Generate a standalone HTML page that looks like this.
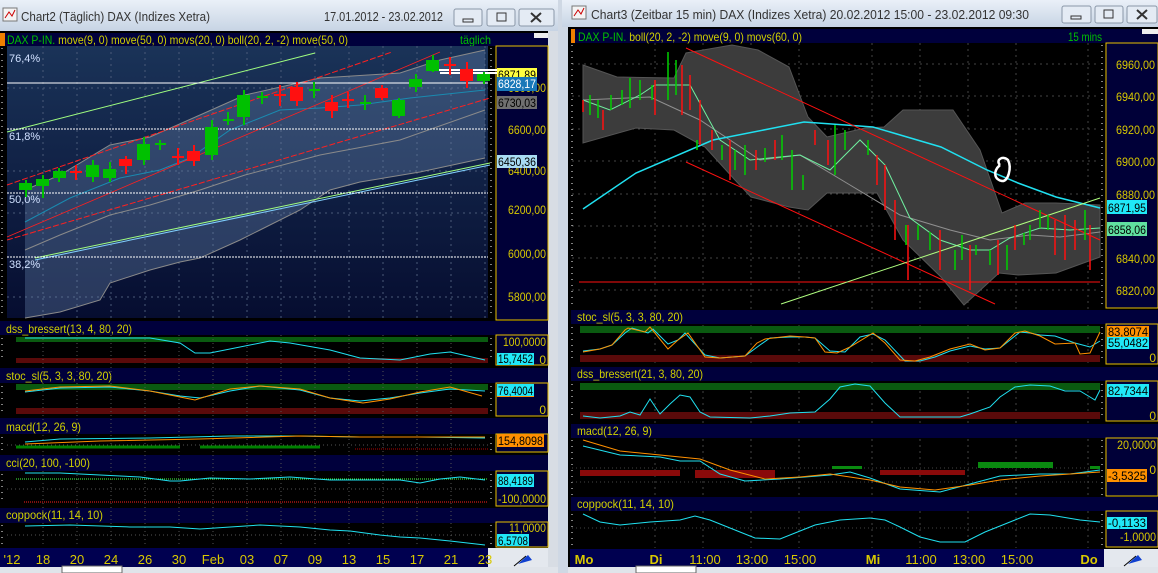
<!DOCTYPE html>
<html><head><meta charset="utf-8"><style>
html,body{margin:0;padding:0;background:#d4dbe5;width:1158px;height:573px;overflow:hidden}
svg{display:block}
text{font-family:"Liberation Sans",sans-serif}
</style></head><body>
<svg width="1158" height="573" viewBox="0 0 1158 573" xmlns="http://www.w3.org/2000/svg">
<defs>
<linearGradient id="tb" x1="0" y1="0" x2="0" y2="1"><stop offset="0" stop-color="#eaf0f8"/><stop offset="1" stop-color="#c7d4e4"/></linearGradient>
<linearGradient id="lm" x1="0" y1="0" x2="0" y2="1"><stop offset="0" stop-color="#1a3358"/><stop offset="1" stop-color="#060d30"/></linearGradient>
</defs>
<rect width="1158" height="573" fill="#cfd8e4"/>
<!-- LEFT WINDOW -->
<rect x="0" y="0" width="558" height="31" fill="url(#tb)"/>
<rect x="3" y="8" width="14" height="13" fill="#f4f4f4" stroke="#777"/><path d="M5 18 L9 12 L12 16 L15 10" stroke="#c00" fill="none"/>
<text x="21" y="21" font-size="13" fill="#333" textLength="189" lengthAdjust="spacingAndGlyphs">Chart2 (Täglich)  DAX (Indizes Xetra)</text>
<text x="324" y="21" font-size="13" fill="#333" textLength="119" lengthAdjust="spacingAndGlyphs">17.01.2012 - 23.02.2012</text>
<g fill="#e4ebf4" stroke="#8a97a8"><rect x="454" y="9" width="28" height="17" rx="2"/><rect x="487" y="9" width="28" height="17" rx="2"/><rect x="519" y="9" width="35" height="17" rx="2"/></g>
<rect x="463" y="19" width="10" height="3" fill="none" stroke="#333"/><rect x="497" y="13" width="9" height="8" fill="none" stroke="#333"/><path d="M531 13 L541 22 M541 13 L531 22" stroke="#333" stroke-width="2"/>
<rect x="0" y="31" width="558" height="542" fill="#000"/>
<rect x="0" y="33" width="548" height="13" fill="#00003c"/>
<rect x="0" y="33" width="5" height="13" fill="#f08000"/>
<text x="7" y="44" font-size="12" fill="#00c000" textLength="341" lengthAdjust="spacingAndGlyphs">DAX P-IN. <tspan fill="#d0d000">move(9, 0) move(50, 0) movs(20, 0) boll(20, 2, -2) move(50, 0)</tspan></text>
<text x="460" y="44" font-size="12" fill="#00c000" textLength="31" lengthAdjust="spacingAndGlyphs">täglich</text>
<rect x="548" y="31" width="10" height="542" fill="#d8dde4"/><rect x="534" y="33" width="14" height="5" fill="#eee"/>
<!-- main plot -->
<rect x="7" y="46" width="481" height="272" fill="url(#lm)"/>
<rect x="488" y="46" width="8" height="272" fill="#000"/>
<rect x="496" y="46" width="52" height="274" fill="#000038" stroke="#e8c000"/>
<g stroke="#4a5a78" stroke-dasharray="2,4"><path d="M43 46V318M77 46V318M111 46V318M145 46V318M179 46V318M213 46V318M247 46V318M281 46V318M315 46V318M349 46V318M383 46V318M417 46V318M451 46V318M485 46V318"/><path d="M7 88H488M7 171H488M7 213H488M7 297H488"/></g>
<polygon points="25,190 60,175 110,145 150,137 200,115 245,95 320,78 400,73 440,60 485,50 485,158 420,172 360,182 330,190 300,210 260,230 240,240 200,258 180,262 150,270 110,283 100,300 60,312 25,318" fill="#6a86b0" fill-opacity="0.35"/>
<polyline points="25,190 60,175 110,145 150,137 200,115 245,95 320,78 400,73 440,60 485,50" fill="none" stroke="#8a8a8a"/>
<polyline points="25,318 60,312 100,300 110,283 150,270 180,262 200,258 240,240 260,230 300,210 330,190 360,182 420,172 485,158" fill="none" stroke="#8a8a8a"/>
<polyline points="25,250 60,235 110,215 150,205 200,190 245,175 320,155 400,140 485,110" fill="none" stroke="#8a8a8a"/>
<polyline points="25,222 70,198 120,178 160,170 190,158 230,130 280,110 320,108 360,105 410,98 485,90" fill="none" stroke="#1a8ab0"/>
<path d="M7 132 L315 53" stroke="#a0ff80"/>
<path d="M7 185 L392 52" stroke="#ff2020" stroke-dasharray="6,2"/>
<path d="M7 240 L490 98" stroke="#ff2020" stroke-dasharray="6,2"/>
<path d="M7 237 L440 52" stroke="#ff2020" stroke-width="0.8"/>
<path d="M35 258 L490 163" stroke="#a0ff80"/><path d="M35 260 L490 165" stroke="#80d0ff"/>
<path d="M7 83H488" stroke="#fff"/>
<g stroke="#fff" stroke-dasharray="2,1"><path d="M7 129H488M7 193H488M7 257H488"/></g>
<g font-size="11" fill="#d0e0ff"><text x="9" y="62">76,4%</text><text x="9" y="140">61,8%</text><text x="9" y="203">50,0%</text><text x="9" y="268">38,2%</text></g>
<path d="M430 70H500M440 73H500" stroke="#fff" stroke-width="2"/>
<!-- candles -->
<g stroke="#00c000" stroke-width="2" fill="#00c000">
<path d="M26 180V197M43 175V198M59 168V182M93 160V182M110 162V182M144 137V165M160 140V150M212 120V160M228 112V125M244 90V125M262 92V104M314 82V98M365 95V110M399 98V118M416 74V92M433 55V72M484 72V84"/>
<rect x="20" y="184" width="11" height="5"/><rect x="37" y="180" width="11" height="5"/><rect x="54" y="172" width="11" height="5"/><rect x="87" y="166" width="11" height="10"/><rect x="104" y="170" width="11" height="7"/><rect x="138" y="145" width="11" height="14"/><rect x="206" y="128" width="11" height="26"/><rect x="238" y="96" width="11" height="20"/><rect x="393" y="101" width="11" height="14"/><rect x="410" y="80" width="11" height="6"/><rect x="427" y="61" width="11" height="9"/><rect x="478" y="75" width="11" height="5"/>
<path d="M155 144H166M223 120H234M257 97H268M309 90H320M360 103H371"/>
</g>
<g stroke="#ff1010" stroke-width="2" fill="#ff1010">
<path d="M76 165V180M126 156V174M178 148V165M194 145V166M280 85V106M297 82V106M332 95V118M348 92V108M382 85V100M450 57V75M467 62V88"/>
<rect x="120" y="160" width="11" height="5"/><rect x="188" y="152" width="11" height="8"/><rect x="291" y="88" width="11" height="12"/><rect x="326" y="103" width="11" height="7"/><rect x="376" y="89" width="11" height="8"/><rect x="461" y="70" width="11" height="10"/>
<path d="M70 172H82M172 157H184M274 95H286M342 100H354M444 65H456"/>
</g>
<!-- left axis labels -->
<g font-size="12" fill="#d8c800" text-anchor="end"><text x="546" y="214" textLength="38" lengthAdjust="spacingAndGlyphs">6200,00</text><text x="546" y="175" textLength="38" lengthAdjust="spacingAndGlyphs">6400,00</text><text x="546" y="134" textLength="38" lengthAdjust="spacingAndGlyphs">6600,00</text><text x="546" y="258" textLength="38" lengthAdjust="spacingAndGlyphs">6000,00</text><text x="546" y="301" textLength="38" lengthAdjust="spacingAndGlyphs">5800,00</text><text x="546" y="92" textLength="38" lengthAdjust="spacingAndGlyphs">6800,00</text></g>
<rect x="497" y="68" width="40" height="13" fill="#ffff40"/><text x="498" y="79" font-size="12" fill="#000" textLength="38" lengthAdjust="spacingAndGlyphs">6871,89</text>
<rect x="497" y="77" width="40" height="14" fill="#1878b8"/><text x="498" y="88" font-size="12" fill="#fff" textLength="38" lengthAdjust="spacingAndGlyphs">6828,17</text>
<rect x="497" y="96" width="40" height="13" fill="#707070"/><text x="498" y="107" font-size="12" fill="#000" textLength="38" lengthAdjust="spacingAndGlyphs">6730,03</text>
<rect x="497" y="155" width="40" height="13" fill="#a8dcf4"/><text x="498" y="166" font-size="12" fill="#000" textLength="38" lengthAdjust="spacingAndGlyphs">6450,36</text>
<!-- left tick column -->
<g stroke="#fff" stroke-dasharray="1,5"><path d="M2 48V318M2 338V362M2 386V414M2 437V450M2 474V504M2 525V546"/></g>
<g stroke="#fff" stroke-dasharray="1,5"><path d="M491 48V318M491 338V362M491 386V414M491 437V450M491 474V504M491 525V546"/></g>
<!-- subpanels left -->
<g fill="#00003c"><rect x="0" y="321" width="548" height="14"/><rect x="0" y="368" width="548" height="15"/><rect x="0" y="418" width="548" height="16"/><rect x="0" y="455" width="548" height="16"/><rect x="0" y="508" width="548" height="15"/></g>
<g font-size="12" fill="#d0d000"><text x="6" y="333" textLength="126" lengthAdjust="spacingAndGlyphs">dss_bressert(13, 4, 80, 20)</text><text x="6" y="380" textLength="106" lengthAdjust="spacingAndGlyphs">stoc_sl(5, 3, 3, 80, 20)</text><text x="6" y="431" textLength="75" lengthAdjust="spacingAndGlyphs">macd(12, 26, 9)</text><text x="6" y="467" textLength="84" lengthAdjust="spacingAndGlyphs">cci(20, 100, -100)</text><text x="6" y="519" textLength="97" lengthAdjust="spacingAndGlyphs">coppock(11, 14, 10)</text></g>
<rect x="16" y="337" width="472" height="5" fill="#0a5a10"/><rect x="16" y="358" width="472" height="5" fill="#5a0a0a"/>
<rect x="16" y="384" width="472" height="6" fill="#0a5a10"/><rect x="16" y="408" width="472" height="6" fill="#5a0a0a"/>
<g stroke="#555" stroke-dasharray="1,3"><path d="M43 335V547M77 335V547M111 335V547M145 335V547M179 335V547M213 335V547M247 335V547M281 335V547M315 335V547M349 335V547M383 335V547M417 335V547M451 335V547"/><path d="M7 445H488M7 489H488M7 535H488"/></g>
<polyline points="25,338 150,338 180,343 195,353 210,353 270,341 290,343 330,350 360,358 400,360 430,354 450,352 485,360" fill="none" stroke="#20e0f0"/>
<polyline points="25,392 60,388 110,387 150,391 180,396 200,398 230,391 260,386 300,390 330,398 360,401 390,398 420,393 450,389 485,391" fill="none" stroke="#20e0f0"/>
<polyline points="25,391 60,387 110,386 150,391 180,397 195,400 230,389 260,386 300,389 330,398 363,403 390,399 420,392 450,387 482,396" fill="none" stroke="#ff9000"/>
<path d="M16 447H180M200 447H320" stroke="#008000" stroke-width="3"/><path d="M355 449H488" stroke="#b00000" stroke-dasharray="1,1"/>
<polyline points="25,442 60,439 150,438 230,436 300,436 360,437 420,437 485,438" fill="none" stroke="#20e0f0"/>
<polyline points="25,444 100,441 200,439 300,436 360,437 485,437" fill="none" stroke="#ff9000"/>
<path d="M16 479H488" stroke="#40ff40" stroke-dasharray="1,1"/><path d="M24 502H488" stroke="#ff2020" stroke-dasharray="1,1"/>
<polyline points="25,473 60,473 100,475 140,477 170,481 180,481 210,478 250,479 290,477 330,480 360,480 400,480 420,483 440,479 460,477 485,480" fill="none" stroke="#20e0f0"/>
<polyline points="25,526 70,525 130,527 170,527 200,529 260,525 300,527 330,530 350,531 380,535 400,537 420,538 450,541 485,545" fill="none" stroke="#20e0f0"/>
<g fill="#000038" stroke="#e8c000"><rect x="496" y="335" width="52" height="30"/><rect x="496" y="383" width="52" height="33"/><rect x="496" y="434" width="52" height="18"/><rect x="496" y="471" width="52" height="35"/><rect x="496" y="522" width="52" height="25"/></g>
<g font-size="12" fill="#d8c800" text-anchor="end"><text x="546" y="346" textLength="43" lengthAdjust="spacingAndGlyphs">100,0000</text><text x="546" y="364">0</text><text x="546" y="414">0</text><text x="546" y="503" textLength="48" lengthAdjust="spacingAndGlyphs">-100,0000</text><text x="546" y="532" textLength="37" lengthAdjust="spacingAndGlyphs">11,0000</text></g>
<rect x="497" y="353" width="37" height="12" fill="#20e8f8"/><text x="498" y="363" font-size="12" fill="#000" textLength="35" lengthAdjust="spacingAndGlyphs">15,7452</text>
<rect x="497" y="384" width="37" height="13" fill="#ff9000"/><rect x="497" y="384" width="37" height="12" fill="#20e8f8"/><text x="498" y="395" font-size="12" fill="#000" textLength="35" lengthAdjust="spacingAndGlyphs">76,4004</text>
<rect x="497" y="434" width="47" height="13" fill="#ff9000"/><text x="498" y="445" font-size="12" fill="#000" textLength="45" lengthAdjust="spacingAndGlyphs">154,8098</text>
<rect x="497" y="474" width="37" height="13" fill="#20e8f8"/><text x="498" y="485" font-size="12" fill="#000" textLength="35" lengthAdjust="spacingAndGlyphs">88,4189</text>
<rect x="497" y="534" width="32" height="12" fill="#20e8f8"/><text x="498" y="545" font-size="12" fill="#000" textLength="30" lengthAdjust="spacingAndGlyphs">6,5708</text>
<!-- x axis left -->
<rect x="0" y="548" width="488" height="19" fill="#000050"/><rect x="488" y="548" width="60" height="19" fill="#e4e8ee"/>
<path d="M518 564 L528 555 L532 560 Z" fill="#1040d0"/><path d="M514 566L526 556" stroke="#000"/>
<g font-size="13" fill="#d8c800" text-anchor="middle"><text x="12" y="564">'12</text><text x="43" y="564">18</text><text x="77" y="564">20</text><text x="111" y="564">24</text><text x="145" y="564">26</text><text x="179" y="564">30</text><text x="213" y="564">Feb</text><text x="247" y="564">03</text><text x="281" y="564">07</text><text x="315" y="564">09</text><text x="349" y="564">13</text><text x="383" y="564">15</text><text x="417" y="564">17</text><text x="451" y="564">21</text><text x="485" y="564">23</text></g>
<rect x="0" y="567" width="558" height="6" fill="#e0e4ea"/><rect x="62" y="566" width="60" height="7" fill="#fff" stroke="#666"/>
<!-- RIGHT WINDOW -->
<rect x="560" y="0" width="598" height="573" fill="#cfd8e4"/>
<rect x="562" y="0" width="596" height="27" fill="url(#tb)"/>
<rect x="572" y="6" width="14" height="13" fill="#f4f4f4" stroke="#777"/><path d="M574 16 L578 10 L581 14 L584 8" stroke="#c00" fill="none"/>
<text x="591" y="19" font-size="13" fill="#333" textLength="438" lengthAdjust="spacingAndGlyphs">Chart3 (Zeitbar 15 min)  DAX (Indizes Xetra) 20.02.2012 15:00 - 23.02.2012 09:30</text>
<g fill="#e4ebf4" stroke="#8a97a8"><rect x="1062" y="6" width="29" height="17" rx="2"/><rect x="1095" y="6" width="28" height="17" rx="2"/><rect x="1127" y="6" width="30" height="17" rx="2"/></g>
<rect x="1071" y="16" width="10" height="3" fill="none" stroke="#333"/><rect x="1104" y="10" width="9" height="8" fill="none" stroke="#333"/><path d="M1137 10 L1147 19 M1147 10 L1137 19" stroke="#333" stroke-width="2"/>
<rect x="568" y="27" width="590" height="546" fill="#000"/>
<rect x="571" y="29" width="587" height="14" fill="#00003c"/><rect x="571" y="29" width="4" height="14" fill="#f08000"/>
<text x="578" y="41" font-size="12" fill="#00c000" textLength="224" lengthAdjust="spacingAndGlyphs">DAX P-IN. <tspan fill="#d0d000">boll(20, 2, -2) move(9, 0) movs(60, 0)</tspan></text>
<text x="1068" y="41" font-size="12" fill="#00c000" textLength="34" lengthAdjust="spacingAndGlyphs">15 mins</text>
<rect x="1142" y="29" width="16" height="5" fill="#eee"/>
<rect x="1106" y="43" width="52" height="265" fill="#000038" stroke="#e8c000"/>
<g stroke="#444" stroke-dasharray="2,4"><path d="M655 43V548M703 43V548M751 43V548M799 43V548M872 43V548M920 43V548M968 43V548M1016 43V548M1088 43V548"/><path d="M572 64H1100M572 96H1100M572 129H1100M572 161H1100M572 194H1100M572 226H1100M572 258H1100M572 290H1100"/></g>
<polygon points="583,65 617,77 674,78 686,53 732,45 758,50 789,67 808,117 827,137 865,128 884,127 903,110 953,110 980,150 1002,213 1025,203 1056,203 1100,205 1100,257 1056,273 1018,275 999,273 964,305 941,277 903,240 877,193 827,193 808,210 789,207 751,197 735,180 705,147 674,130 636,128 583,143" fill="#3c3c3c" stroke="#555"/>
<polyline points="583,100 650,97 700,120 760,160 800,155 850,185 900,215 950,230 990,240 1030,235 1060,237 1100,232" fill="none" stroke="#909090"/>
<polyline points="583,100 610,110 640,95 655,85 690,85 720,140 750,160 800,155 830,170 860,140 885,165 910,218 940,240 970,250 990,250 1010,238 1040,228 1070,230 1100,228" fill="none" stroke="#70f0a0"/>
<polyline points="583,209 636,173 713,140 804,122 873,127 941,147 987,170 1018,183 1056,197 1100,208" fill="none" stroke="#20e0f0" stroke-width="1.5"/>
<path d="M686 48 L1100 240M686 162 L995 304M579 282H1100" stroke="#ff1010"/>
<path d="M781 304 L1100 198" stroke="#b0ff80"/>
<path d="M1000 165 C995 160 1003 155 1008 160 C1012 168 1008 182 1002 181 C995 180 992 172 1000 165" fill="none" stroke="#fff" stroke-width="2.5"/>
<g stroke="#00d000" stroke-width="1.5"><path d="M590 95V115M598 100V118M611 95V110M622 90V105M630 78V108M640 80V100M652 85V100M668 52V100M676 60V95M697 140V150M722 145V160M735 150V170M745 145V175M765 148V162M782 135V160M792 150V190M803 175V190M835 125V175M845 130V150M868 140V155M906 225V245M918 225V240M930 232V250M955 250V270M962 235V260M976 245V255M990 250V265M1007 245V270M1024 233V245M1030 225V240M1040 210V228M1048 215V230M1085 210V240"/></g>
<g stroke="#ff1010" stroke-width="1.5"><path d="M583 100V112M603 110V130M655 80V115M682 65V115M690 75V110M700 100V145M712 130V150M730 140V180M756 150V170M775 140V160M815 130V145M828 140V165M877 155V185M885 165V210M895 200V240M908 225V280M940 230V270M970 245V290M998 240V275M1015 225V250M1055 220V255M1065 215V260M1075 220V250M1090 225V270"/></g>
<g font-size="12" fill="#d8c800" text-anchor="end"><text x="1155" y="69" textLength="39" lengthAdjust="spacingAndGlyphs">6960,00</text><text x="1155" y="101" textLength="39" lengthAdjust="spacingAndGlyphs">6940,00</text><text x="1155" y="134" textLength="39" lengthAdjust="spacingAndGlyphs">6920,00</text><text x="1155" y="166" textLength="39" lengthAdjust="spacingAndGlyphs">6900,00</text><text x="1155" y="199" textLength="39" lengthAdjust="spacingAndGlyphs">6880,00</text><text x="1155" y="263" textLength="39" lengthAdjust="spacingAndGlyphs">6840,00</text><text x="1155" y="295" textLength="39" lengthAdjust="spacingAndGlyphs">6820,00</text></g>
<rect x="1107" y="200" width="40" height="14" fill="#20e8f8"/><text x="1108" y="212" font-size="12" fill="#000" textLength="38" lengthAdjust="spacingAndGlyphs">6871,95</text>
<rect x="1107" y="222" width="40" height="14" fill="#60e0a0"/><text x="1108" y="234" font-size="12" fill="#000" textLength="38" lengthAdjust="spacingAndGlyphs">6858,06</text>
<g stroke="#fff" stroke-dasharray="1,5"><path d="M572 45V308M572 327V362M572 384V420M572 440V495M572 514V548M1102 45V308M1102 327V362M1102 384V420M1102 440V495M1102 514V548"/></g>
<!-- right subpanels -->
<g fill="#00003c"><rect x="571" y="310" width="587" height="14"/><rect x="571" y="367" width="587" height="14"/><rect x="571" y="424" width="587" height="14"/><rect x="571" y="497" width="587" height="14"/></g>
<g font-size="12" fill="#d0d000"><text x="577" y="321" textLength="106" lengthAdjust="spacingAndGlyphs">stoc_sl(5, 3, 3, 80, 20)</text><text x="577" y="378" textLength="126" lengthAdjust="spacingAndGlyphs">dss_bressert(21, 3, 80, 20)</text><text x="577" y="435" textLength="75" lengthAdjust="spacingAndGlyphs">macd(12, 26, 9)</text><text x="577" y="508" textLength="97" lengthAdjust="spacingAndGlyphs">coppock(11, 14, 10)</text></g>
<rect x="580" y="326" width="520" height="7" fill="#0a5a10"/><rect x="580" y="355" width="520" height="7" fill="#5a0a0a"/>
<rect x="580" y="383" width="520" height="7" fill="#0a5a10"/><rect x="580" y="412" width="520" height="7" fill="#5a0a0a"/>
<path d="M572 468H1100M572 482H1100M572 528H1100" stroke="#444" stroke-dasharray="1,3"/>
<polyline points="583,351 600,349 612,345 625,333 632,328 648,333 653,329 668,344 678,340 685,333 705,355 720,358 745,356 760,345 770,338 790,337 805,337 815,338 830,351 845,352 860,337 873,334 885,340 905,361 920,361 935,357 950,351 970,346 985,349 1000,348 1020,332 1030,333 1040,335 1055,336 1075,343 1090,347 1100,341" fill="none" stroke="#20e0f0"/>
<polyline points="583,352 600,349 612,345 625,330 628,328 645,332 650,327 668,349 678,340 688,333 705,357 720,358 745,356 757,343 765,339 790,336 805,337 815,338 825,352 837,353 850,347 873,333 885,343 900,360 915,361 930,357 950,349 970,344 985,350 1000,348 1015,333 1025,331 1040,336 1055,344 1075,343 1080,354 1090,353 1100,332" fill="none" stroke="#ff9000"/>
<polyline points="583,416 600,418 620,416 630,412 640,415 650,399 660,414 670,404 680,395 690,397 700,412 710,417 750,418 770,416 790,413 815,412 830,399 840,387 855,384 870,386 885,403 900,417 920,417 960,417 970,414 990,407 1000,397 1015,387 1030,385 1050,386 1065,391 1080,391 1090,397 1095,400 1100,390" fill="none" stroke="#20e0f0"/>
<g fill="#8a0a0a"><rect x="580" y="470" width="100" height="6"/><rect x="695" y="470" width="80" height="8"/><rect x="880" y="470" width="85" height="5"/></g>
<g fill="#0a8a10"><rect x="832" y="466" width="30" height="3"/><rect x="978" y="462" width="75" height="6"/><rect x="1090" y="466" width="10" height="3"/></g>
<polyline points="583,446 620,455 660,457 680,461 700,461 720,474 745,481 780,479 830,475 850,472 870,478 900,489 940,492 970,484 1000,476 1040,474 1070,474 1100,470" fill="none" stroke="#20e0f0"/>
<polyline points="583,440 620,451 660,455 700,459 730,470 765,479 800,477 830,474 870,480 900,487 935,490 970,485 1000,480 1040,476 1070,474 1100,472" fill="none" stroke="#ff9000"/>
<polyline points="583,514 600,522 620,525 650,522 680,520 695,516 710,520 740,532 755,538 780,539 800,531 815,525 840,520 870,518 885,520 900,527 920,537 940,542 965,542 985,532 1010,522 1030,514 1050,515 1080,520 1100,522" fill="none" stroke="#20e0f0"/>
<g fill="#000038" stroke="#e8c000"><rect x="1106" y="324" width="52" height="40"/><rect x="1106" y="381" width="52" height="40"/><rect x="1106" y="438" width="52" height="58"/><rect x="1106" y="511" width="52" height="36"/></g>
<g font-size="12" fill="#d8c800" text-anchor="end"><text x="1156" y="362">0</text><text x="1156" y="420">0</text><text x="1156" y="449" textLength="39" lengthAdjust="spacingAndGlyphs">20,0000</text><text x="1156" y="474">0</text><text x="1156" y="541" textLength="36" lengthAdjust="spacingAndGlyphs">-1,0000</text></g>
<rect x="1107" y="326" width="42" height="12" fill="#ff9000"/><text x="1108" y="336" font-size="12" fill="#000" textLength="40" lengthAdjust="spacingAndGlyphs">83,8074</text>
<rect x="1107" y="337" width="42" height="12" fill="#20e8f8"/><text x="1108" y="347" font-size="12" fill="#000" textLength="40" lengthAdjust="spacingAndGlyphs">55,0482</text>
<rect x="1107" y="384" width="42" height="13" fill="#20e8f8"/><text x="1108" y="395" font-size="12" fill="#000" textLength="40" lengthAdjust="spacingAndGlyphs">82,7344</text>
<rect x="1107" y="469" width="40" height="13" fill="#ff9000"/><text x="1108" y="480" font-size="12" fill="#000" textLength="38" lengthAdjust="spacingAndGlyphs">-3,5325</text>
<rect x="1107" y="517" width="40" height="12" fill="#20e8f8"/><text x="1108" y="527" font-size="12" fill="#000" textLength="38" lengthAdjust="spacingAndGlyphs">-0,1133</text>
<rect x="570" y="549" width="534" height="18" fill="#000050"/><rect x="1104" y="549" width="54" height="18" fill="#e4e8ee"/>
<path d="M1128 564 L1138 555 L1142 560 Z" fill="#1040d0"/><path d="M1124 566L1136 556" stroke="#000"/>
<g font-size="13" fill="#d8c800" text-anchor="middle"><text x="584" y="564" font-weight="bold">Mo</text><text x="656" y="564" font-weight="bold">Di</text><text x="705" y="564">11:00</text><text x="752" y="564">13:00</text><text x="800" y="564">15:00</text><text x="873" y="564" font-weight="bold">Mi</text><text x="921" y="564">11:00</text><text x="969" y="564">13:00</text><text x="1017" y="564">15:00</text><text x="1089" y="564" font-weight="bold">Do</text></g>
<rect x="568" y="567" width="590" height="6" fill="#e0e4ea"/><rect x="636" y="566" width="60" height="7" fill="#fff" stroke="#666"/>
</svg>
</body></html>
